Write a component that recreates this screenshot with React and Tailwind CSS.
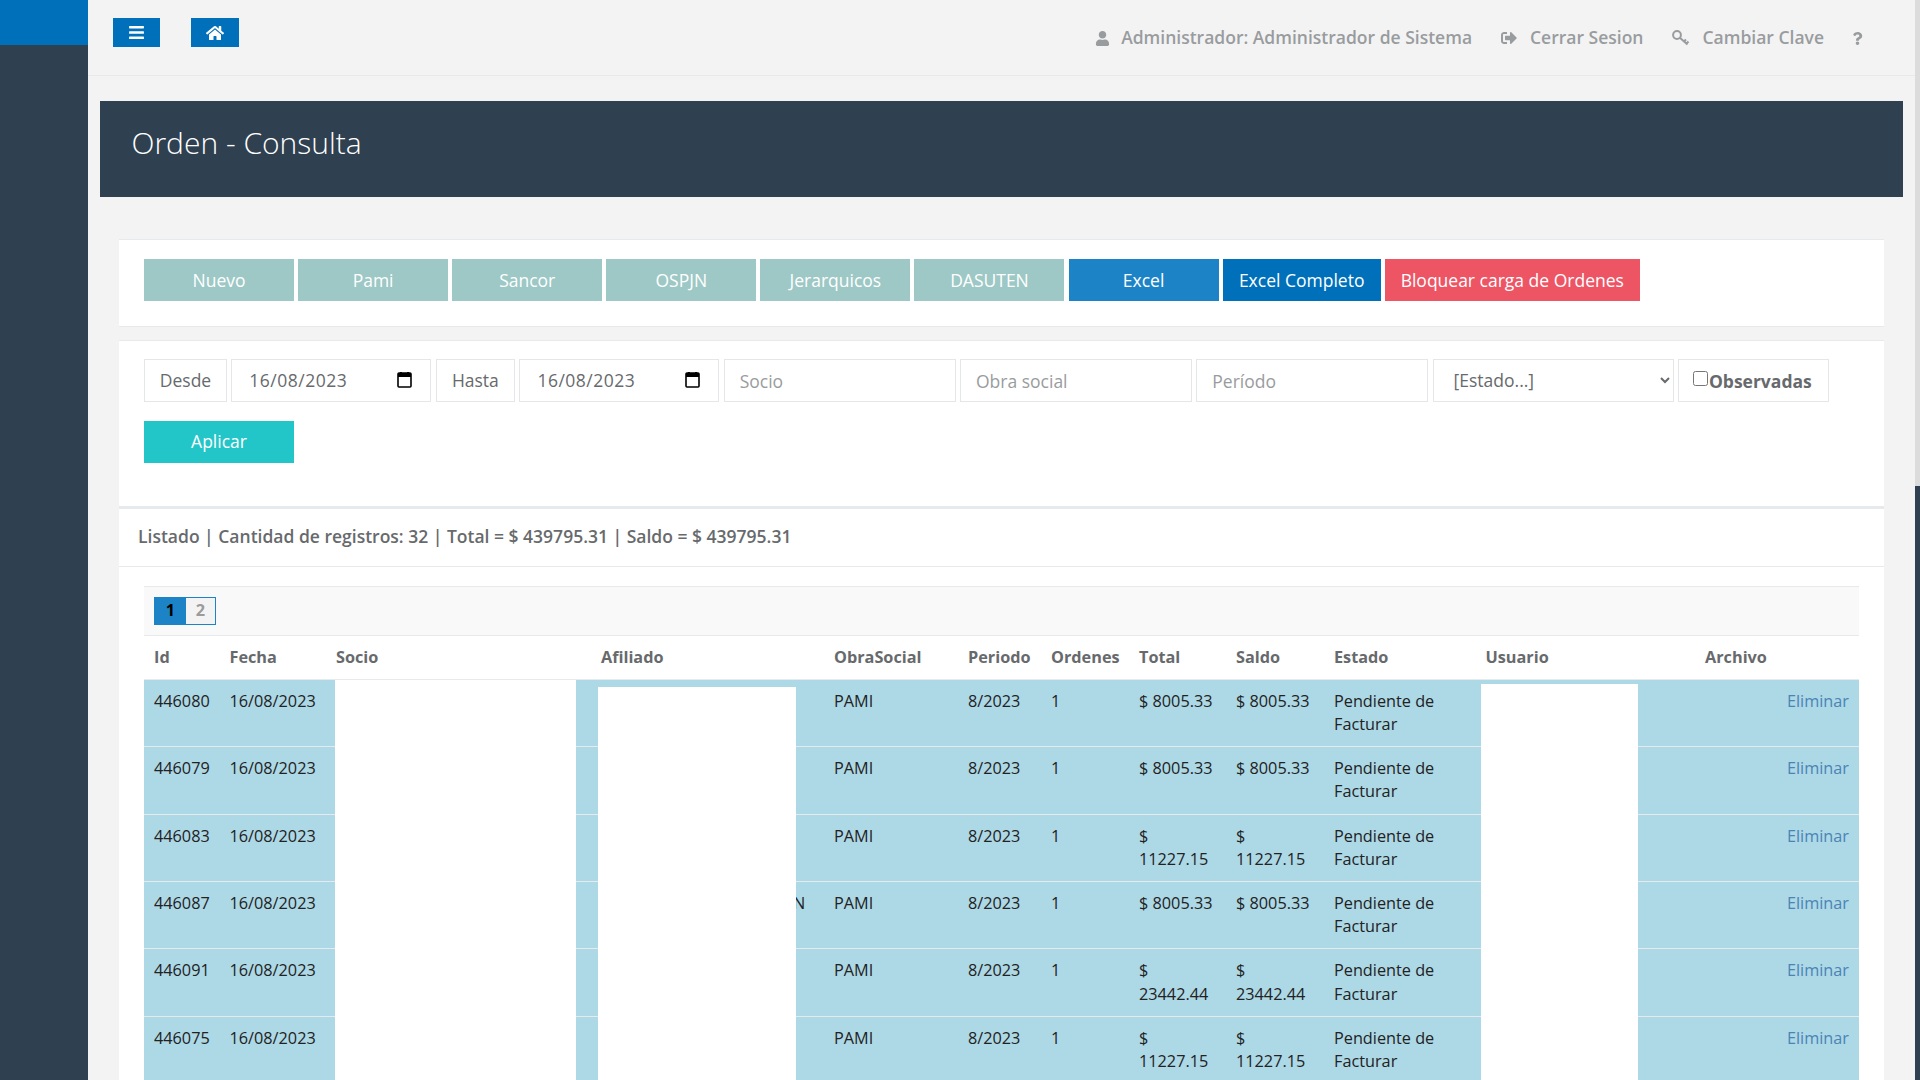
import { FaBars, FaHome, FaUser, FaSignOutAlt, FaQuestion } from "react-icons/fa";

const rows = [
  { id: "446080", total: "$ 8005.33" },
  { id: "446079", total: "$ 8005.33" },
  { id: "446083", total: "$ 11227.15" },
  { id: "446087", total: "$ 8005.33", afiliado: "N" },
  { id: "446091", total: "$ 23442.44" },
  { id: "446075", total: "$ 11227.15" },
];

const headers = ["Id", "Fecha", "Socio", "Afiliado", "ObraSocial", "Periodo", "Ordenes", "Total", "Saldo", "Estado", "Usuario", "Archivo"];

const KeyIcon = () => (
  <svg width="18" height="16" viewBox="0 0 18 16" fill="none" stroke="#999c9e" strokeWidth="2">
    <circle cx="5" cy="5" r="3.9" />
    <path d="M7.6 7.6 L15.5 14.5 M12 11.5 L14 9.5 M14.5 13.5 L16.5 11.5" />
  </svg>
);

const CalendarIcon = () => (
  <svg width="15" height="16" viewBox="0 0 15 16" className="shrink-0">
    <rect x="1" y="1" width="13" height="14" rx="1" fill="none" stroke="#000" strokeWidth="1.6" />
    <rect x="1" y="1" width="13" height="4" fill="#000" />
    <rect x="3" y="0" width="2" height="2" fill="#000" />
    <rect x="10" y="0" width="2" height="2" fill="#000" />
  </svg>
);

const Btn = ({ color, width, children }) => (
  <button className={`${color} ${width} h-[42px] pt-[1px] text-white text-[17.5px] text-center`}>{children}</button>
);

const DateBox = () => (
  <div className="w-[200px] h-[42.5px] border border-[#e5e6e7] flex items-center justify-between pl-[17px] pr-[18px] text-[#676a6c] tracking-[0.5px]">
    <span>16/08/2023</span>
    <CalendarIcon />
  </div>
);

const AddOn = ({ width, children }) => (
  <div className={`${width} h-[42.5px] border border-[#e5e6e7] flex items-center justify-center text-[#676a6c]`}>{children}</div>
);

const TextInput = ({ placeholder }) => (
  <input
    placeholder={placeholder}
    className="w-[232px] h-[42.5px] border border-[#e5e6e7] px-[15px] pt-[1px] text-[17.5px] placeholder:text-[#999c9e] outline-none"
  />
);

export default function App() {
  return (
    <div className="flex h-screen overflow-hidden bg-[#f3f3f4] font-['Open_Sans',sans-serif] text-[16.25px] leading-[23.2px] text-[#676a6c]">
      <aside className="w-[88px] shrink-0 bg-[#2f4050]">
        <div className="h-[45px] bg-[#0070ba]"></div>
      </aside>

      <main className="flex-1 min-w-0">
        <div className="h-[76px] border-b border-[#e7eaec] flex items-start pt-[18px] pl-[25px] pr-[51px]">
          <button className="w-[47px] h-[29px] bg-[#0070ba] flex items-center justify-center text-white">
            <FaBars size={17} />
          </button>
          <button className="w-[48px] h-[29px] ml-[31px] bg-[#0070ba] flex items-center justify-center text-white">
            <FaHome size={18} />
          </button>
          <div className="ml-auto h-[40px] flex items-center font-semibold text-[#999c9e] text-[17.5px]">
            <FaUser size={15} className="mr-[11px]" />
            <span>Administrador: Administrador de Sistema</span>
            <FaSignOutAlt size={16} className="ml-[29px] mr-[13px]" />
            <span>Cerrar Sesion</span>
            <span className="ml-[29px] mr-[12px]"><KeyIcon /></span>
            <span>Cambiar Clave</span>
            <FaQuestion size={13} className="ml-[27px]" />
          </div>
        </div>

        <div className="mt-[25px] mx-[12px] h-[96px] bg-[#2f4050] pt-[25px] pl-[31.5px]">
          <h2 className="text-[30px] leading-[33px] font-light text-white">Orden - Consulta</h2>
        </div>

        <div className="mt-[42px] mx-[31px] bg-white border-y border-[#e7eaec] pt-[19px] pb-[25px] pl-[25px] flex gap-[4.1px]">
          <Btn color="bg-[#9dc8c5]" width="w-[150px]">Nuevo</Btn>
          <Btn color="bg-[#9dc8c5]" width="w-[150px]">Pami</Btn>
          <Btn color="bg-[#9dc8c5]" width="w-[150px]">Sancor</Btn>
          <Btn color="bg-[#9dc8c5]" width="w-[150px]">OSPJN</Btn>
          <Btn color="bg-[#9dc8c5]" width="w-[150px]">Jerarquicos</Btn>
          <Btn color="bg-[#9dc8c5]" width="w-[150px]">DASUTEN</Btn>
          <Btn color="bg-[#1c84c6]" width="w-[150px]">Excel</Btn>
          <Btn color="bg-[#0070ba]" width="w-[158px]">Excel Completo</Btn>
          <Btn color="bg-[#ed5565]" width="w-[255px]">Bloquear carga de Ordenes</Btn>
        </div>

        <div className="mt-[13px] mx-[31px] bg-white border-t border-[#e7eaec]">
          <div className="pt-[18px] pb-[43px] pl-[25px] border-b-[3px] border-[#e7eaec] text-[17.5px]">
            <div className="flex gap-[4.3px]">
              <AddOn width="w-[83px]">Desde</AddOn>
              <DateBox />
              <AddOn width="w-[79.5px]">Hasta</AddOn>
              <DateBox />
              <TextInput placeholder="Socio" />
              <TextInput placeholder="Obra social" />
              <TextInput placeholder="Período" />
              <select className="w-[241px] h-[42.5px] border border-[#e5e6e7] pl-[16px] pr-[4px] bg-white text-[17.5px] text-[#676a6c] outline-none">
                <option>[Estado...]</option>
              </select>
              <label className="w-[151px] h-[42.5px] border border-[#e5e6e7] flex items-center pl-[14px] pt-[2px] font-bold">
                <input type="checkbox" className="w-[15px] h-[15px] mb-[5px] mr-[1px]" />
                Observadas
              </label>
            </div>
            <button className="block w-[150px] h-[42px] mt-[19.5px] bg-[#23c6c8] text-white">Aplicar</button>
          </div>

          <div className="h-[58px] border-b border-[#e7eaec] pl-[19px] pb-[1px] flex items-center font-semibold text-[17.5px]">
            Listado | Cantidad de registros: 32 | Total = $ 439795.31 | Saldo = $ 439795.31
          </div>

          <div className="mt-[19px] mx-[25px]">
            <div className="h-[49.5px] bg-[#f9f9f9] border-y border-[#e7eaec] pt-[10px] pl-[10px]">
              <div className="flex w-[62px] h-[28px] border border-[#1c84c6] font-bold leading-[24px] text-center">
                <span className="w-[31px] bg-[#1c84c6] text-black">1</span>
                <span className="flex-1 bg-[#f3f3f4] text-[#9b9b9b]">2</span>
              </div>
            </div>

            <div className="relative">
              <table className="w-full table-fixed border-collapse">
                <colgroup>
                  <col className="w-[75.5px]" />
                  <col className="w-[106.5px]" />
                  <col className="w-[265px]" />
                  <col className="w-[233px]" />
                  <col className="w-[134px]" />
                  <col className="w-[83px]" />
                  <col className="w-[88px]" />
                  <col className="w-[97px]" />
                  <col className="w-[98px]" />
                  <col className="w-[151.5px]" />
                  <col className="w-[219.5px]" />
                  <col className="w-[164px]" />
                </colgroup>
                <thead>
                  <tr className="border-b border-[#e7eaec]">
                    {headers.map((h) => (
                      <th key={h} className="p-[10px] text-left font-bold">{h}</th>
                    ))}
                  </tr>
                </thead>
                <tbody>
                  {rows.map((r) => (
                    <tr key={r.id} className="bg-[#add8e6] border-t border-[#e7eaec] text-[#222] align-top">
                      <td className="p-[10px]">{r.id}</td>
                      <td className="p-[10px]">16/08/2023</td>
                      <td className="p-[10px]"></td>
                      <td className="p-[10px] pl-[202px] whitespace-nowrap">{r.afiliado}</td>
                      <td className="p-[10px]">PAMI</td>
                      <td className="p-[10px]">8/2023</td>
                      <td className="p-[10px]">1</td>
                      <td className="p-[10px]">{r.total}</td>
                      <td className="p-[10px]">{r.total}</td>
                      <td className="p-[10px]">Pendiente de Facturar</td>
                      <td className="p-[10px]"></td>
                      <td className="p-[10px] text-right text-[#4a84b5]">Eliminar</td>
                    </tr>
                  ))}
                </tbody>
              </table>
              {/* tapados en la captura original */}
              <div className="absolute left-[191px] top-[44px] bottom-0 w-[241px] bg-white"></div>
              <div className="absolute left-[454px] top-[51px] bottom-0 w-[198px] bg-white"></div>
              <div className="absolute left-[1337px] top-[48px] bottom-0 w-[157px] bg-white"></div>
            </div>
          </div>
        </div>
      </main>

      <div className="w-[5px] shrink-0 flex flex-col">
        <div className="h-[486px] bg-[#dcdcdc]"></div>
        <div className="flex-1 bg-[#2f4050]"></div>
      </div>
    </div>
  );
}
